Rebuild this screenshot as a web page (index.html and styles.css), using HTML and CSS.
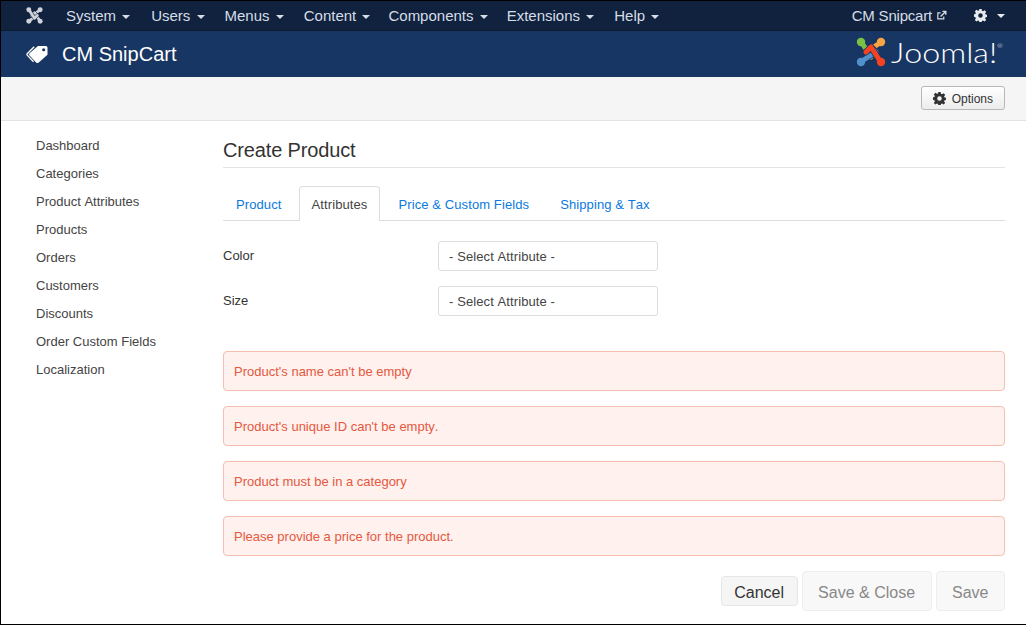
FILE: index.html
```html
<!DOCTYPE html>
<html lang="en">

<head>
    <meta charset="UTF-8" />
    <title>CM SnipCart - Create Product</title>
    <link rel="stylesheet" href="styles.css">
</head>

<body>
    <div class="page">
        <nav class="topbar">
            <svg class="topbar-logo" viewBox="0 0 30 30" width="17" height="17">
                <g fill="none" stroke-linecap="round" stroke-linejoin="round">
                    <g>
                        <path stroke="#10223e" stroke-width="6.4" d="M24 6 10 15 15 20" />
                        <path stroke="#cfd3d9" stroke-width="5" d="M24 6 10 15 15 20" />
                        <circle cx="25" cy="5" r="4.4" fill="#cfd3d9" stroke="none" />
                    </g>
                    <g transform="rotate(90 15 15)">
                        <path stroke="#10223e" stroke-width="6.4" d="M24 6 10 15 15 20" />
                        <path stroke="#cfd3d9" stroke-width="5" d="M24 6 10 15 15 20" />
                        <circle cx="25" cy="5" r="4.4" fill="#cfd3d9" stroke="none" />
                    </g>
                    <g transform="rotate(180 15 15)">
                        <path stroke="#10223e" stroke-width="6.4" d="M24 6 10 15 15 20" />
                        <path stroke="#cfd3d9" stroke-width="5" d="M24 6 10 15 15 20" />
                        <circle cx="25" cy="5" r="4.4" fill="#cfd3d9" stroke="none" />
                    </g>
                    <g transform="rotate(270 15 15)">
                        <path stroke="#10223e" stroke-width="6.4" d="M24 6 10 15 15 20" />
                        <path stroke="#cfd3d9" stroke-width="5" d="M24 6 10 15 15 20" />
                        <circle cx="25" cy="5" r="4.4" fill="#cfd3d9" stroke="none" />
                    </g>
                </g>
            </svg>
            <ul class="topmenu">
                <li>System <span class="caret"></span></li>
                <li>Users <span class="caret"></span></li>
                <li>Menus <span class="caret"></span></li>
                <li>Content <span class="caret"></span></li>
                <li>Components <span class="caret"></span></li>
                <li>Extensions <span class="caret"></span></li>
                <li>Help <span class="caret"></span></li>
            </ul>
            <div class="topbar-right">
                <span class="site-link">CM Snipcart
                    <svg viewBox="0 0 12 12" width="11" height="11">
                        <path d="M8.5 7v2.6H2V3.2h3" fill="none" stroke="#d6dde6" stroke-width="1.3" />
                        <path d="M5 7.2 10 2.2M7 1.5h3.7v3.7" fill="none" stroke="#d6dde6" stroke-width="1.5" />
                    </svg>
                </span>
                <span class="user-menu">
                    <svg class="gear" viewBox="0 0 16 16" width="13" height="13">
                        <path fill="#e8eaee" fill-rule="evenodd" d="M6.6 0h2.8l.4 2.2 1.3.6 1.9-1.3 2 2-1.3 1.9.6 1.3 2.2.4v2.8l-2.2.4-.6 1.3 1.3 1.9-2 2-1.9-1.3-1.3.6-.4 2.2H6.6l-.4-2.2-1.3-.6-1.9 1.3-2-2 1.3-1.9-.6-1.3L-.5 9.4V6.6l2.2-.4.6-1.3L1 3l2-2 1.9 1.3 1.3-.6zM8 5.2a2.8 2.8 0 1 0 0 5.6 2.8 2.8 0 0 0 0-5.6z" />
                    </svg>
                    <span class="caret"></span>
                </span>
            </div>
        </nav>

        <header class="titlebar">
            <div class="titlebar-name">
                <svg viewBox="0 0 24 20" width="23" height="19">
                    <path fill="#fff" d="M12.5 1h8.2c1 0 1.8.8 1.8 1.8v7.4L13 18.6c-.7.6-1.6.6-2.2 0L3.6 11c-.6-.7-.6-1.6 0-2.2z" />
                    <path fill="none" stroke="#fff" stroke-width="1.4" d="M8.5 1.8 1.2 9.2c-.4.5-.4 1 0 1.5l6.6 7" />
                    <circle cx="18.5" cy="5" r="1.7" fill="#183663" />
                </svg>
                <span>CM SnipCart</span>
            </div>
            <div class="brand">
                <svg viewBox="0 0 30 30" width="30" height="30">
                    <g fill="none" stroke-linecap="round" stroke-linejoin="round">
                        <g transform="rotate(270 15 15)">
                            <path stroke="#183663" stroke-width="6.4" d="M24 6 10 15 15 20" />
                            <path stroke="#7ac143" stroke-width="5" d="M24 6 10 15 15 20" />
                            <circle cx="25" cy="5" r="4.2" fill="#7ac143" stroke="none" />
                        </g>
                        <g>
                            <path stroke="#183663" stroke-width="6.4" d="M24 6 10 15 15 20" />
                            <path stroke="#f9a541" stroke-width="5" d="M24 6 10 15 15 20" />
                            <circle cx="25" cy="5" r="4.2" fill="#f9a541" stroke="none" />
                        </g>
                        <g transform="rotate(180 15 15)">
                            <path stroke="#183663" stroke-width="6.4" d="M24 6 10 15 15 20" />
                            <path stroke="#5091cd" stroke-width="5" d="M24 6 10 15 15 20" />
                            <circle cx="25" cy="5" r="4.2" fill="#5091cd" stroke="none" />
                        </g>
                        <g transform="rotate(90 15 15)">
                            <path stroke="#183663" stroke-width="6.4" d="M24 6 10 15 15 20" />
                            <path stroke="#f44321" stroke-width="5" d="M24 6 10 15 15 20" />
                            <circle cx="25" cy="5" r="4.2" fill="#f44321" stroke="none" />
                        </g>
                    </g>
                </svg>
                <span class="brand-word">Joomla!<sup>®</sup></span>
            </div>
        </header>

        <div class="toolbar">
            <button class="btn-options" type="button">
                <svg viewBox="0 0 16 16" width="13" height="13">
                    <path fill="#333" fill-rule="evenodd" d="M6.6 0h2.8l.4 2.2 1.3.6 1.9-1.3 2 2-1.3 1.9.6 1.3 2.2.4v2.8l-2.2.4-.6 1.3 1.3 1.9-2 2-1.9-1.3-1.3.6-.4 2.2H6.6l-.4-2.2-1.3-.6-1.9 1.3-2-2 1.3-1.9-.6-1.3L-.5 9.4V6.6l2.2-.4.6-1.3L1 3l2-2 1.9 1.3 1.3-.6zM8 5.2a2.8 2.8 0 1 0 0 5.6 2.8 2.8 0 0 0 0-5.6z" />
                </svg>
                <span>Options</span>
            </button>
        </div>

        <div class="main">
            <ul class="sidebar">
                <li>Dashboard</li>
                <li>Categories</li>
                <li>Product Attributes</li>
                <li>Products</li>
                <li>Orders</li>
                <li>Customers</li>
                <li>Discounts</li>
                <li>Order Custom Fields</li>
                <li>Localization</li>
            </ul>

            <div class="content">
                <h1>Create Product</h1>

                <ul class="tabs">
                    <li>Product</li>
                    <li class="active">Attributes</li>
                    <li>Price &amp; Custom Fields</li>
                    <li>Shipping &amp; Tax</li>
                </ul>

                <div class="field">
                    <label>Color</label>
                    <div class="select">- Select Attribute -</div>
                </div>
                <div class="field">
                    <label>Size</label>
                    <div class="select">- Select Attribute -</div>
                </div>

                <div class="errors">
                    <div class="alert">Product's name can't be empty</div>
                    <div class="alert">Product's unique ID can't be empty.</div>
                    <div class="alert">Product must be in a category</div>
                    <div class="alert">Please provide a price for the product.</div>
                </div>

                <div class="actions">
                    <button class="btn-cancel" type="button">Cancel</button>
                    <button class="btn-off" type="button">Save &amp; Close</button>
                    <button class="btn-off" type="button">Save</button>
                </div>
            </div>
        </div>
    </div>
</body>

</html>
```

FILE: styles.css
```css
* {
    box-sizing: border-box;
}

body {
    margin: 0;
    font-family: "Liberation Sans", Arial, sans-serif;
    font-size: 13px;
    font-kerning: none;
    color: #333;
    background: #fff;
}

ul {
    list-style: none;
    margin: 0;
    padding: 0;
}

.page {
    width: 1026px;
    height: 625px;
    overflow: hidden;
    border: 1px solid #000;
    border-right: 0;
    background: #fff;
}

/* top menu */
.topbar {
    display: flex;
    align-items: center;
    height: 30px;
    padding: 0 21px 0 25px;
    background: #10223e;
    border-bottom: 1px solid #0c1a30;
    color: #d6dde6;
    font-size: 15px;
}

.topbar-logo {
    margin-right: 23px;
}

.topmenu {
    display: flex;
    gap: 20px;
}

.topmenu li:first-child {
    margin-right: 1px;
}

.topmenu li:nth-child(4) {
    margin-right: -2px;
}

.topmenu li:nth-child(5) {
    margin-right: -1px;
}

.caret {
    display: inline-block;
    width: 0;
    height: 0;
    margin-left: 2px;
    vertical-align: middle;
    border-top: 4px solid currentColor;
    border-left: 4px solid transparent;
    border-right: 4px solid transparent;
}

.topbar-right {
    display: flex;
    align-items: center;
    gap: 27px;
    margin-left: auto;
}

.site-link {
    letter-spacing: -0.2px;
}

.user-menu {
    display: flex;
    align-items: center;
    gap: 8px;
    color: #e8eaee;
}

/* component title */
.titlebar {
    display: flex;
    align-items: center;
    justify-content: space-between;
    height: 46px;
    padding: 0 0 0 25px;
    background: #183663;
    color: #fff;
}

.titlebar-name {
    display: flex;
    align-items: center;
    gap: 13px;
    font-size: 20px;
}

.brand {
    display: flex;
    align-items: center;
    gap: 5px;
    width: 170px;
    margin-bottom: 4px;
}

.brand-word {
    font-family: Lato, "Open Sans", sans-serif;
    font-weight: 300;
    font-size: 28px;
    line-height: 30px;
    transform: scaleX(1.15);
    transform-origin: left center;
}

.brand-word sup {
    font-size: 6px;
    vertical-align: 15px;
    line-height: 0;
}

/* options bar */
.toolbar {
    display: flex;
    justify-content: flex-end;
    align-items: center;
    height: 44px;
    padding: 0 21px 1px 0;
    background: #f5f5f5;
    border-bottom: 1px solid #e3e3e3;
}

.btn-options {
    display: flex;
    align-items: center;
    gap: 6px;
    height: 24px;
    padding: 0 11px;
    font: 12px "Liberation Sans", Arial, sans-serif;
    font-kerning: none;
    color: #333;
    background: linear-gradient(#fff, #ececec);
    border: 1px solid #b8b8b8;
    border-radius: 3px;
}

.btn-options span {
    padding-top: 1px;
}

/* page body */
.main {
    display: flex;
}

.sidebar {
    width: 222px;
    padding: 11px 0 0 35px;
    line-height: 28px;
    color: #444;
}

.content {
    width: 782px;
}

h1 {
    margin: 0;
    height: 47px;
    padding-top: 16px;
    font-size: 20px;
    font-weight: 400;
    line-height: 26px;
    letter-spacing: -0.15px;
    border-bottom: 1px solid #e3e3e3;
}

.tabs {
    display: flex;
    height: 35px;
    margin: 18px 0 20px;
    border-bottom: 1px solid #ddd;
    color: #0a7ae0;
    letter-spacing: 0.1px;
}

.tabs li {
    height: 35px;
    padding: 0 12px;
    margin-right: 5px;
    line-height: 36px;
    border: 1px solid transparent;
    border-bottom: 0;
}

.tabs li:first-child {
    margin-right: 4px;
}

.tabs .active {
    color: #444;
    background: #fff;
    border-color: #ddd;
    border-radius: 4px 4px 0 0;
}

.field {
    display: flex;
    align-items: center;
    height: 30px;
    margin-bottom: 15px;
}

.field label {
    width: 215px;
    margin-top: -2px;
}

.select {
    width: 220px;
    height: 30px;
    padding-left: 10px;
    line-height: 30px;
    color: #444;
    letter-spacing: 0.1px;
    border: 1px solid #ddd;
    border-radius: 3px;
}

.errors {
    display: flex;
    flex-direction: column;
    gap: 15px;
    margin-top: 35px;
}

.alert {
    height: 40px;
    padding-left: 10px;
    line-height: 39px;
    color: #e5583e;
    background: #fef1ee;
    border: 1px solid #f7bfb0;
    border-radius: 4px;
}

.actions {
    display: flex;
    justify-content: flex-end;
    align-items: center;
    gap: 4px;
    margin-top: 15px;
}

.actions button {
    padding-top: 4px;
    font: 16px "Liberation Sans", Arial, sans-serif;
    font-kerning: none;
    border-radius: 4px;
}

.btn-cancel {
    width: 77px;
    height: 30px;
    color: #333;
    background: #f5f5f5;
    border: 1px solid #e6e6e6;
}

.actions .btn-off {
    height: 40px;
    padding: 3px 15.5px 0;
    color: #888;
    background: #f8f8f8;
    border: 1px solid #eee;
}
```
